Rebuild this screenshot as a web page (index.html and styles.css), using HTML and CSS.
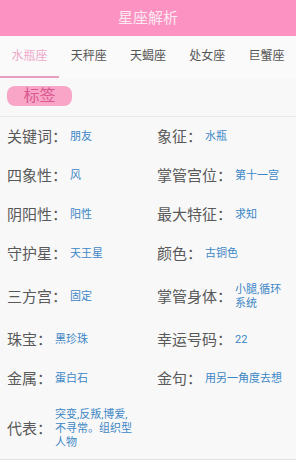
FILE: index.html
```html
<!DOCTYPE html>
<html lang="zh-CN">
<head>
<meta charset="utf-8">
<title>星座解析</title>
<link rel="stylesheet" href="styles.css">
</head>
<body>
<div class="app">
  <header class="topbar">星座解析</header>
  <nav class="tabs">
    <div class="tab active">水瓶座</div>
    <div class="tab">天秤座</div>
    <div class="tab">天蝎座</div>
    <div class="tab">处女座</div>
    <div class="tab">巨蟹座</div>
  </nav>
  <div class="tagbar"><span class="pill">标签</span></div>
  <div class="grid">
    <div class="cell left"><span class="label">关键词：</span><span class="value">朋友</span></div>
    <div class="cell right"><span class="label">象征：</span><span class="value">水瓶</span></div>
    <div class="cell left"><span class="label">四象性：</span><span class="value">风</span></div>
    <div class="cell right"><span class="label">掌管宫位：</span><span class="value">第十一宫</span></div>
    <div class="cell left"><span class="label">阴阳性：</span><span class="value">阳性</span></div>
    <div class="cell right"><span class="label">最大特征：</span><span class="value">求知</span></div>
    <div class="cell left"><span class="label">守护星：</span><span class="value">天王星</span></div>
    <div class="cell right"><span class="label">颜色：</span><span class="value">古铜色</span></div>
    <div class="cell left"><span class="label">三方宫：</span><span class="value">固定</span></div>
    <div class="cell right"><span class="label">掌管身体：</span><span class="value">小腿,循环系统</span></div>
    <div class="cell left"><span class="label">珠宝：</span><span class="value">黑珍珠</span></div>
    <div class="cell right"><span class="label">幸运号码：</span><span class="value">22</span></div>
    <div class="cell left"><span class="label">金属：</span><span class="value">蛋白石</span></div>
    <div class="cell right"><span class="label">金句：</span><span class="value">用另一角度去想</span></div>
    <div class="cell left"><span class="label">代表：</span><span class="value">突变,反叛,博爱,不寻常。组织型人物</span></div>
    <div class="cell right"></div>
  </div>
</div>
</body>
</html>
```

FILE: styles.css
```css
* { box-sizing: border-box; }
html, body { margin: 0; padding: 0; }
body {
  width: 296px;
  height: 460px;
  overflow: hidden;
  background: #f8f8f8;
  font-family: Roboto, "Noto Sans CJK SC", sans-serif;
}
.app { display: flex; flex-direction: column; }
.topbar {
  height: 36px;
  background: #fb92c1;
  color: #fde9f2;
  font-size: 15px;
  line-height: 36px;
  text-align: center;
}
.tabs {
  display: grid;
  grid-template-columns: repeat(5, 1fr);
  height: 42px;
  background: #fafafa;
}
.tab {
  font-size: 12px;
  line-height: 40px;
  text-align: center;
  color: #555555;
  border-bottom: 2px solid transparent;
}
.tab.active {
  color: #eeaacb;
  border-bottom-color: #ea9ec2;
}
.tagbar {
  height: 39px;
  padding: 8px 0 0 7px;
  border-bottom: 1px solid #e9e9e9;
}
.pill {
  display: inline-block;
  width: 65px;
  height: 20px;
  border-radius: 8px;
  background: #f8a5c7;
  color: #d9588f;
  font-size: 16px;
  line-height: 20px;
  text-align: center;
}
.grid {
  display: grid;
  grid-template-columns: 148px 148px;
  border-bottom: 2px solid #e2e2e2;
}
.cell {
  display: flex;
  align-items: center;
  padding-top: 10px;
  padding-bottom: 9px;
  min-height: 39px;
}
.cell.left { padding-left: 7px; padding-right: 10px; }
.cell.right { padding-left: 9px; padding-right: 7px; }
.label {
  flex: none;
  font-size: 15px;
  line-height: 20px;
  color: #595959;
}
.value {
  margin-left: 3px;
  font-size: 11px;
  line-height: 14px;
  color: #3d87c6;
}
```
